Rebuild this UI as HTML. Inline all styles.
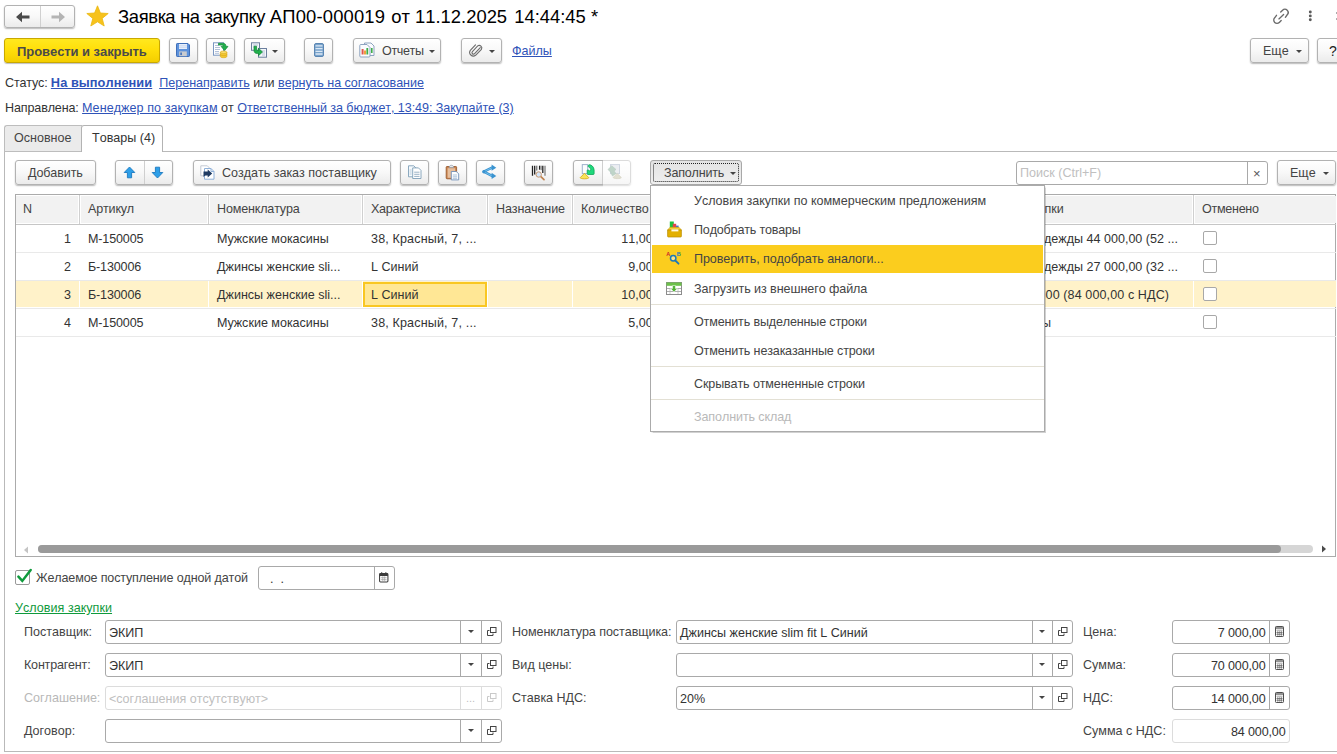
<!DOCTYPE html>
<html lang="ru">
<head>
<meta charset="utf-8">
<title>Заявка на закупку</title>
<style>
html,body{margin:0;padding:0;background:#fff;}
body{font-kerning:none;width:1337px;height:754px;position:relative;overflow:hidden;font-family:"Liberation Sans",Arial,sans-serif;font-size:12.55px;color:#333;line-height:17px;}
.a{position:absolute;white-space:nowrap;}
.btn{position:absolute;box-sizing:border-box;border:1px solid #b2b2b2;border-radius:3px;background:linear-gradient(#ffffff 0%,#f8f8f8 50%,#ebebeb 100%);box-shadow:0 1px 1.5px rgba(0,0,0,.28);white-space:nowrap;}
.btn .t{position:absolute;top:4px;line-height:17px;color:#444;}
.lnk{color:#2f53b8;text-decoration:underline;}
.dd{position:absolute;width:0;height:0;border-left:3.5px solid transparent;border-right:3.5px solid transparent;border-top:3.5px solid #444;}
.inp{position:absolute;box-sizing:border-box;border:1px solid #a9a9a9;border-radius:3px;background:#fff;height:24px;}
.inp .v{position:absolute;left:3px;top:4px;line-height:17px;color:#333;}
.inp .sep{position:absolute;top:0;bottom:0;width:1px;background:#a9a9a9;}
.inp.dis{border-color:#dcdcdc;}
.inp.dis .sep{background:#dcdcdc;}
.lbl{position:absolute;white-space:nowrap;color:#444;line-height:17px;}
svg{position:absolute;overflow:visible;}
</style>
</head>
<body>

<!-- ===== Title row ===== -->
<div class="btn" style="left:4px;top:5px;width:71px;height:23px;"></div>
<div class="a" style="left:40px;top:6px;width:1px;height:21px;background:#d0d0d0;"></div>
<svg style="left:15px;top:11px;" width="16" height="12" viewBox="0 0 16 12"><path d="M1 6 L7 0.8 L7 4.6 L14.5 4.6 L14.5 7.4 L7 7.4 L7 11.2 Z" fill="#4a4a4a"/></svg>
<svg style="left:50px;top:11px;" width="16" height="12" viewBox="0 0 16 12"><path d="M15 6 L9 0.8 L9 4.6 L1.5 4.6 L1.5 7.4 L9 7.4 L9 11.2 Z" fill="#b4b4b4"/></svg>
<svg style="left:86px;top:5px;" width="23" height="22" viewBox="0 0 23 22"><path d="M11.5 0.8 L14.4 8 L22.2 8.5 L16.2 13.4 L18.2 21 L11.5 16.8 L4.8 21 L6.8 13.4 L0.8 8.5 L8.6 8 Z" fill="#f7c21c" stroke="#eab70f" stroke-width="0.8" stroke-linejoin="round"/></svg>
<div class="a" style="left:118px;top:5px;font-size:18.4px;line-height:24px;color:#000;"><span style="letter-spacing:-0.35px;">Заявка на закупку </span><span style="letter-spacing:0.17px;">АП00-000019</span><span style="margin-left:1px;"> от 11.12.2025</span><span style="margin-left:2px;"> 14:44:45 *</span></div>

<!-- ===== Command bar ===== -->
<div class="btn" style="left:4px;top:38px;width:156px;height:25px;border-color:#c9a800;background:linear-gradient(#ffe81f 0%,#ffdf0a 45%,#f4ce00 100%);box-shadow:0 1px 1px rgba(0,0,0,.25);"><span class="t" style="left:12px;top:4px;font-weight:bold;font-size:13px;color:#4a4a4a;letter-spacing:-.06px;">Провести и закрыть</span></div>
<div class="btn" style="left:169px;top:38px;width:29px;height:25px;"></div>
<div class="btn" style="left:206px;top:38px;width:29px;height:25px;"></div>
<div class="btn" style="left:244px;top:38px;width:41px;height:25px;"><i class="dd" style="left:27px;top:11px;"></i></div>
<div class="btn" style="left:304px;top:38px;width:29px;height:25px;"></div>
<div class="btn" style="left:353px;top:38px;width:88px;height:25px;"><span class="t" style="left:28px;letter-spacing:-.37px;">Отчеты</span><i class="dd" style="left:75px;top:11px;"></i></div>
<div class="btn" style="left:461px;top:38px;width:41px;height:25px;"><i class="dd" style="left:27px;top:11px;"></i></div>
<div class="a lnk" style="left:512px;top:43px;">Файлы</div>
<div class="btn" style="left:1250px;top:38px;width:59px;height:25px;"><span class="t" style="left:12px;">Еще</span><i class="dd" style="left:45px;top:11px;"></i></div>
<div class="btn" style="left:1317px;top:38px;width:30px;height:25px;"><span class="t" style="left:11px;color:#222;font-size:14px;">?</span></div>

<!-- ===== Status lines ===== -->
<div class="a" style="left:5px;top:74px;"><span style="letter-spacing:-.15px;">Статус: </span><b class="lnk" style="font-size:12.8px;letter-spacing:.05px;">На выполнении</b>&nbsp; <span class="lnk">Перенаправить</span> или <span class="lnk" style="letter-spacing:-.05px;">вернуть на согласование</span></div>
<div class="a" style="left:5px;top:100px;"><span style="letter-spacing:-.13px;">Направлена: </span><span class="lnk" style="letter-spacing:.07px;">Менеджер по закупкам</span> от <span class="lnk" style="letter-spacing:-.065px;">Ответственный за бюджет, 13:49: Закупайте (3)</span></div>

<!-- ===== Tabs + page frame ===== -->
<div class="a" style="left:4px;top:151px;width:1340px;height:601px;box-sizing:border-box;border:1px solid #b9b9b9;border-right:none;background:#fff;"></div>
<div class="a" style="left:4px;top:125px;width:78px;height:27px;box-sizing:border-box;border:1px solid #bdbdbd;border-right:none;border-radius:3px 0 0 0;background:#ebebeb;"></div>
<div class="a" style="left:81px;top:125px;width:82px;height:27px;box-sizing:border-box;border:1px solid #b3b3b3;border-bottom:none;border-radius:3px 3px 0 0;background:#fff;"></div>
<div class="a" style="left:14px;top:130px;color:#444;">Основное</div>
<div class="a" style="left:92px;top:130px;color:#333;">Товары (4)</div>

<!-- ===== Table toolbar ===== -->
<div class="btn" style="left:15px;top:160px;width:81px;height:25px;"><span class="t" style="left:12px;letter-spacing:-.1px;">Добавить</span></div>
<div class="btn" style="left:115px;top:160px;width:58px;height:25px;"></div>
<div class="a" style="left:144px;top:161px;width:1px;height:23px;background:#cfcfcf;"></div>
<div class="btn" style="left:193px;top:160px;width:198px;height:25px;"><span class="t" style="left:28px;">Создать заказ поставщику</span></div>
<div class="btn" style="left:400px;top:160px;width:29px;height:25px;"></div>
<div class="btn" style="left:438px;top:160px;width:29px;height:25px;"></div>
<div class="btn" style="left:476px;top:160px;width:29px;height:25px;"></div>
<div class="btn" style="left:524px;top:160px;width:29px;height:25px;"></div>
<div class="btn" style="left:573px;top:160px;width:58px;height:25px;"></div>
<div class="a" style="left:602px;top:161px;width:1px;height:23px;background:#cfcfcf;"></div>
<div class="a" style="left:603px;top:160px;width:29px;height:27px;background:rgba(255,255,255,.55);"></div>
<div class="btn" style="left:650px;top:160px;width:92px;height:25px;background:linear-gradient(#e3e3e3,#efefef);border-color:#a8a8a8;box-shadow:none;"><span class="t" style="left:13px;letter-spacing:-.2px;">Заполнить</span><i class="dd" style="left:78.500px;top:11px;"></i><div style="position:absolute;left:2px;top:2px;right:2px;bottom:2px;border:1px dotted #222;border-radius:2px;"></div></div>
<div class="inp" style="left:1016px;top:161px;width:252px;height:24px;"><span class="v" style="color:#c0c0c0;left:3px;top:3px;">Поиск (Ctrl+F)</span><i class="sep" style="left:230px;"></i><span class="v" style="left:236px;top:3px;color:#555;font-size:13px;">×</span></div>
<div class="btn" style="left:1277px;top:160px;width:59px;height:25px;"><span class="t" style="left:12px;">Еще</span><i class="dd" style="left:45px;top:11px;"></i></div>


<!-- ===== Icons ===== -->
<svg style="left:176px;top:43px;" width="14" height="14" viewBox="0 0 14 14"><path d="M1.2 .5H12l1.5 1.5v10.8a.7.7 0 0 1-.7.7H1.2a.7.7 0 0 1-.7-.7V1.2a.7.7 0 0 1 .7-.7z" fill="#5d92dc" stroke="#3f6fb9" stroke-width="1"/><rect x="3" y="1" width="8" height="5" fill="#e6eefb"/><path d="M3 2.7h8M3 4.3h8" stroke="#c3d3ee" stroke-width=".7"/><rect x="3.2" y="8.4" width="7.6" height="4.8" fill="#c9cbcf"/><rect x="4.3" y="9.5" width="1.6" height="2.6" fill="#3f6fb9"/></svg>
<svg style="left:213px;top:42px;" width="16" height="16" viewBox="0 0 16 16"><rect x=".5" y=".8" width="10" height="12.4" fill="#fff" stroke="#7a97c2" stroke-width="1"/><path d="M2 3.5h4M2 5.5h5M2 7.5h5M2 9.5h4M2 11.3h4" stroke="#9eb1cf" stroke-width=".8"/><path d="M5.5 1.2h4.3c2.2 0 3.2 1.3 3.2 3.2h2L11.6 8.6 8.1 4.4h2.1c0-.9-.4-1.3-1.3-1.3H5.5z" fill="#21b04b" stroke="#12853a" stroke-width=".7" stroke-linejoin="round"/><path d="M7.3 10.2v4.2c0 .8 1.5 1.3 3.3 1.3s3.3-.5 3.3-1.3v-4.2z" fill="#f2c832"/><ellipse cx="10.6" cy="10.2" rx="3.3" ry="1.2" fill="#fbe27a" stroke="#d9a514" stroke-width=".6"/><path d="M7.3 12.3c0 .8 1.5 1.3 3.3 1.3s3.3-.5 3.3-1.3M7.3 14.4c0 .8 1.5 1.3 3.3 1.3s3.3-.5 3.3-1.3M7.3 10.2v4.2M13.9 10.2v4.2" fill="none" stroke="#d9a514" stroke-width=".6"/></svg>
<svg style="left:251px;top:42px;" width="16" height="16" viewBox="0 0 16 16"><rect x=".5" y=".8" width="8" height="7.5" fill="#f4f7fb" stroke="#6c7f9e" stroke-width="1"/><path d="M2 3h5M2 5h3" stroke="#a9b8d0" stroke-width=".8"/><rect x="7.5" y="6.5" width="8" height="8.7" fill="#f4f7fb" stroke="#6c7f9e" stroke-width="1"/><path d="M9.5 9h4.5M11 11h3M11 13h3" stroke="#a9b8d0" stroke-width=".8"/><path d="M3 4.2h2.6v3c0 .9.4 1.3 1.3 1.3h.6V6.3l4 3.7-4 3.7v-2.2H6.300c-2.300 0-3.300-1.200-3.300-3.300z" fill="#21b04b" stroke="#12853a" stroke-width=".7" stroke-linejoin="round"/></svg>
<svg style="left:314px;top:43px;" width="10" height="14" viewBox="0 0 10 14"><rect x=".5" y=".5" width="9" height="13" rx="1.5" fill="#78a3cb" stroke="#5b86b3" stroke-width="1"/><path d="M1.5 2.9h7M1.5 5.6h7M1.5 8.3h7M1.500 11h7" stroke="#dbe8f5" stroke-width="1.3"/></svg>
<svg style="left:359px;top:42px;" width="16" height="16" viewBox="0 0 16 16"><path d="M5.5 1h6.500l3 3v9.500h-9.500z" fill="#fbfcfe" stroke="#8ea3bf" stroke-width="1" stroke-linejoin="round"/><path d="M.8 3.500a1 1 0 0 1 1-1h6.200l3 3v8.500a1 1 0 0 1-1 1h-8.200a1 1 0 0 1-1-1z" fill="#fbfcfe" stroke="#8ea3bf" stroke-width="1" stroke-linejoin="round"/><rect x="2.600" y="7" width="2" height="5.500" fill="#e2574c"/><rect x="5" y="8.500" width="2" height="4" fill="#f0a23c"/><rect x="7.400" y="6" width="1.800" height="6.500" fill="#3fae49"/><rect x="12" y="6" width="1.600" height="5" fill="#3fae49"/></svg>
<svg style="left:469px;top:43px;" width="13" height="14" viewBox="0 0 13 14"><path d="M11.300 4.600 5.600 10.700a1.500 1.500 0 0 1-2.200-2.100L8.700 2.900a2.600 2.600 0 0 1 3.700 3.500L6.600 12.300a3.700 3.700 0 0 1-5.300-5L6.500 1.800" fill="none" stroke="#6b6b6b" stroke-width="1.100" stroke-linecap="round"/></svg>
<svg style="left:1273px;top:7.500px;" width="17" height="17" viewBox="0 0 17 17"><g fill="none" stroke="#6a6a6a" stroke-width="1.350" stroke-linecap="round"><path d="M7.700 4.100 9.600 2.200A3.250 3.250 0 0 1 14.200 6.800L12.400 9.300"/><path d="M8.200 12.500 6.300 14.400A3.250 3.250 0 0 1 1.700 9.800L3.500 7.300"/><path d="M5.900 10.900 10.600 6.500"/></g></svg>
<svg style="left:1308px;top:10px;" width="5" height="12" viewBox="0 0 5 12"><circle cx="2.300" cy="2" r="1.450" fill="#5a5a5a"/><circle cx="2.300" cy="5.900" r="1.450" fill="#5a5a5a"/><circle cx="2.300" cy="9.800" r="1.450" fill="#5a5a5a"/></svg>
<svg style="left:1335.500px;top:12px;" width="8" height="8" viewBox="0 0 8 8"><path d="M.500.500 7.500 7.500M7.500.500.500 7.500" stroke="#5a5a5a" stroke-width="1.400"/></svg>
<svg style="left:123px;top:166px;" width="13" height="13" viewBox="0 0 13 13"><path d="M6.500 1 11.800 6.500H8.600V11.800H4.400V6.500H1.200z" fill="#2d9fe8" stroke="#1b78bf" stroke-width=".9" stroke-linejoin="round"/></svg>
<svg style="left:151px;top:166px;" width="13" height="13" viewBox="0 0 13 13"><path d="M6.500 12 11.800 6.500H8.600V1.200H4.400V6.500H1.200z" fill="#2d9fe8" stroke="#1b78bf" stroke-width=".9" stroke-linejoin="round"/></svg>
<svg style="left:200px;top:165px;" width="15" height="15" viewBox="0 0 15 15"><path d="M.8.800h6.500l2.500 2.500v7.500h-9z" fill="#fff" stroke="#c3c9d3" stroke-width="1"/><path d="M4.500 3.500h6.500l3 3v7.700h-9.500z" fill="#fff" stroke="#8fb0d8" stroke-width="1" stroke-linejoin="round"/><path d="M11 3.500v3h3" fill="none" stroke="#8fb0d8" stroke-width="1"/><path d="M3.500 6.600h4.200V4.600L12.200 8.500 7.700 12.400v-2H6.500c-1 0-2.100.4-3 1.600z" fill="#1f3b63"/></svg>
<svg style="left:408px;top:165px;" width="15" height="15" viewBox="0 0 15 15"><path d="M.500.800h5.300l2 2v9H.500z" fill="#f6fafd" stroke="#7f9fb8" stroke-width=".9" stroke-linejoin="round"/><path d="M1.600 5h2M1.600 7h2M1.600 9h2" stroke="#a9c0d3" stroke-width=".8"/><path d="M4.700 2.900h5.800l2.500 2.500v8.100H4.700z" fill="#fff" stroke="#7f9fb8" stroke-width=".9" stroke-linejoin="round"/><path d="M6.200 7.200h5.300M6.200 9.300h5.300M6.200 11.400h5.300" stroke="#8fa9c0" stroke-width=".9"/></svg>
<svg style="left:445px;top:164px;" width="16" height="17" viewBox="0 0 16 17"><rect x="1.200" y="2.500" width="10.400" height="12.300" rx=".8" fill="#c9824e" stroke="#9a5a2c" stroke-width=".9"/><rect x="2.600" y="4.200" width="7.600" height="9.600" fill="#e6bf9d"/><path d="M4 3.600c0-1.300 1-2.300 2.400-2.300s2.400 1 2.400 2.300z" fill="#e3e7ec" stroke="#8d96a3" stroke-width=".7"/><path d="M6.300 7.500h5l2.400 2.400v6H6.300z" fill="#fbfdff" stroke="#6f8fb8" stroke-width=".9" stroke-linejoin="round"/><path d="M7.800 11h4.300M7.800 12.800h4.300M7.800 14.300h4.300" stroke="#9ab4d2" stroke-width=".8"/></svg>
<svg style="left:482px;top:164px;" width="15" height="16" viewBox="0 0 15 16"><path d="M1.800 7.700 10 3.700M1.800 7.700 10 11.900" stroke="#3a93d0" stroke-width="2.500" fill="none" stroke-linecap="round"/><path d="M1.800 7.700 10 3.700M1.800 7.700 10 11.900" stroke="#79c4ee" stroke-width=".9" fill="none" stroke-linecap="round"/><path d="M9.600.600 14.300 3.700 9.600 6.800z" fill="#3a93d0"/><path d="M9.600 8.800 14.300 11.900 9.600 15z" fill="#3a93d0"/><circle cx="1.900" cy="7.700" r="1.700" fill="#3a93d0"/></svg>
<svg style="left:531px;top:165px;" width="16" height="16" viewBox="0 0 16 16"><path d="M1.500.700v10.100M3.700.700v8.800" stroke="#222" stroke-width="1.300"/><path d="M5.800.700v4.800" stroke="#222" stroke-width=".8"/><path d="M8.600.700v4" stroke="#222" stroke-width="1.300"/><path d="M10.200.700v4.500" stroke="#222" stroke-width=".6"/><path d="M11.800.700v7.300" stroke="#222" stroke-width="1.300"/><path d="M14 .700v10.100" stroke="#8a8a8a" stroke-width="1.400"/><path d="M9.600 11.400 13 14.600" stroke="#c0834f" stroke-width="1.700" stroke-linecap="round"/><circle cx="7.700" cy="9.500" r="2.700" fill="#d3e6fb" stroke="#c9986e" stroke-width="1"/></svg>
<!-- ===== Table ===== -->
<div class="a" style="left:15px;top:194px;width:1321px;height:363px;box-sizing:border-box;border:1px solid #ababab;border-right:1px solid #ababab;background:#fff;"></div>
<div class="a" style="left:16px;top:196px;width:62px;height:27px;background:#f2f2f2;"></div>
<div class="a" style="left:81px;top:196px;width:126px;height:27px;background:#f2f2f2;"></div>
<div class="a" style="left:210px;top:196px;width:151px;height:27px;background:#f2f2f2;"></div>
<div class="a" style="left:364px;top:196px;width:122px;height:27px;background:#f2f2f2;"></div>
<div class="a" style="left:489px;top:196px;width:82px;height:27px;background:#f2f2f2;"></div>
<div class="a" style="left:574px;top:196px;width:125px;height:27px;background:#f2f2f2;"></div>
<div class="a" style="left:702px;top:196px;width:117px;height:27px;background:#f2f2f2;"></div>
<div class="a" style="left:822px;top:196px;width:117px;height:27px;background:#f2f2f2;"></div>
<div class="a" style="left:942px;top:196px;width:250px;height:27px;background:#f2f2f2;"></div>
<div class="a" style="left:1195px;top:196px;width:141px;height:27px;background:#f2f2f2;"></div>
<div class="a" style="left:79px;top:195px;width:1px;height:29px;background:#d0d0d0;"></div>
<div class="a" style="left:208px;top:195px;width:1px;height:29px;background:#d0d0d0;"></div>
<div class="a" style="left:362px;top:195px;width:1px;height:29px;background:#d0d0d0;"></div>
<div class="a" style="left:487px;top:195px;width:1px;height:29px;background:#d0d0d0;"></div>
<div class="a" style="left:572px;top:195px;width:1px;height:29px;background:#d0d0d0;"></div>
<div class="a" style="left:700px;top:195px;width:1px;height:29px;background:#d0d0d0;"></div>
<div class="a" style="left:820px;top:195px;width:1px;height:29px;background:#d0d0d0;"></div>
<div class="a" style="left:940px;top:195px;width:1px;height:29px;background:#d0d0d0;"></div>
<div class="a" style="left:1193px;top:195px;width:1px;height:29px;background:#d0d0d0;"></div>
<div class="a" style="left:16px;top:224px;width:1320px;height:1px;background:#c6c6c6;"></div>
<div class="a" style="left:23px;top:201px;color:#444;">N</div>
<div class="a" style="left:88px;top:201px;color:#444;letter-spacing:-.17px;">Артикул</div>
<div class="a" style="left:217px;top:201px;color:#444;letter-spacing:-.15px;">Номенклатура</div>
<div class="a" style="left:371px;top:201px;color:#444;letter-spacing:-.27px;">Характеристика</div>
<div class="a" style="left:496px;top:201px;color:#444;letter-spacing:-.12px;">Назначение</div>
<div class="a" style="left:581px;top:201px;color:#444;">Количество</div>
<div class="a" style="left:1202px;top:201px;color:#444;letter-spacing:-0.28px;">Отменено</div>
<div class="a" style="right:273.300px;top:201px;color:#444;">Условия закупки</div>
<div class="a" style="left:16px;top:252px;width:1320px;height:1px;background:#e9e9e9;"></div>
<div class="a" style="left:40px;width:31px;text-align:right;top:231px;">1</div>
<div class="a" style="left:88px;top:231px;letter-spacing:-.15px;">М-150005</div>
<div class="a" style="left:217px;top:231px;">Мужские мокасины</div>
<div class="a" style="left:371px;top:231px;letter-spacing:.15px;">38, Красный, 7, ...</div>
<div class="a" style="left:582.7px;width:70px;text-align:right;top:231px;">11,00</div>
<div class="a" style="left:1044px;top:231px;">дежды 44 000,00 (52 ...</div>
<div class="a" style="left:1203px;top:231px;width:14px;height:14px;box-sizing:border-box;border:1px solid #a8a8a8;border-radius:2px;background:#fff;"></div>
<div class="a" style="left:16px;top:280px;width:1320px;height:1px;background:#e9e9e9;"></div>
<div class="a" style="left:40px;width:31px;text-align:right;top:259px;">2</div>
<div class="a" style="left:88px;top:259px;letter-spacing:-.15px;">Б-130006</div>
<div class="a" style="left:217px;top:259px;">Джинсы женские sli...</div>
<div class="a" style="left:371px;top:259px;">L Синий</div>
<div class="a" style="left:582.7px;width:70px;text-align:right;top:259px;">9,00</div>
<div class="a" style="left:1044px;top:259px;">дежды 27 000,00 (32 ...</div>
<div class="a" style="left:1203px;top:259px;width:14px;height:14px;box-sizing:border-box;border:1px solid #a8a8a8;border-radius:2px;background:#fff;"></div>
<div class="a" style="left:16px;top:281px;width:63px;height:26px;background:#fff2c9;"></div>
<div class="a" style="left:80px;top:281px;width:128px;height:26px;background:#fff2c9;"></div>
<div class="a" style="left:209px;top:281px;width:153px;height:26px;background:#fff2c9;"></div>
<div class="a" style="left:363px;top:281px;width:124px;height:26px;background:#fff2c9;"></div>
<div class="a" style="left:488px;top:281px;width:84px;height:26px;background:#fff2c9;"></div>
<div class="a" style="left:573px;top:281px;width:127px;height:26px;background:#fff2c9;"></div>
<div class="a" style="left:701px;top:281px;width:119px;height:26px;background:#fff2c9;"></div>
<div class="a" style="left:821px;top:281px;width:119px;height:26px;background:#fff2c9;"></div>
<div class="a" style="left:941px;top:281px;width:252px;height:26px;background:#fff2c9;"></div>
<div class="a" style="left:1194px;top:281px;width:142px;height:26px;background:#fff2c9;"></div>
<div class="a" style="left:363px;top:282px;width:124px;height:25px;box-sizing:border-box;background:#ffe795;border:2px solid #f9c722;"></div>
<div class="a" style="left:16px;top:308px;width:1320px;height:1px;background:#e9e9e9;"></div>
<div class="a" style="left:40px;width:31px;text-align:right;top:287px;">3</div>
<div class="a" style="left:88px;top:287px;letter-spacing:-.15px;">Б-130006</div>
<div class="a" style="left:217px;top:287px;">Джинсы женские sli...</div>
<div class="a" style="left:371px;top:287px;">L Синий</div>
<div class="a" style="left:582.7px;width:70px;text-align:right;top:287px;">10,00</div>
<div class="a" style="left:1042px;top:287px;letter-spacing:.1px;">,00 (84 000,00 с НДС)</div>
<div class="a" style="left:1203px;top:287px;width:14px;height:14px;box-sizing:border-box;border:1px solid #a8a8a8;border-radius:2px;background:#fff;"></div>
<div class="a" style="left:16px;top:336px;width:1320px;height:1px;background:#e9e9e9;"></div>
<div class="a" style="left:40px;width:31px;text-align:right;top:315px;">4</div>
<div class="a" style="left:88px;top:315px;letter-spacing:-.15px;">М-150005</div>
<div class="a" style="left:217px;top:315px;">Мужские мокасины</div>
<div class="a" style="left:371px;top:315px;letter-spacing:.15px;">38, Красный, 7, ...</div>
<div class="a" style="left:582.7px;width:70px;text-align:right;top:315px;">5,00</div>
<div class="a" style="left:1042px;top:315px;">ы</div>
<div class="a" style="left:1203px;top:315px;width:14px;height:14px;box-sizing:border-box;border:1px solid #a8a8a8;border-radius:2px;background:#fff;"></div>
<div class="a" style="left:38px;top:545px;width:1275px;height:8px;border-radius:4px;background:#d6d6d6;"></div>
<div class="a" style="left:38px;top:545px;width:1243px;height:8px;border-radius:4px;background:#9a9a9a;"></div>
<svg style="left:23px;top:545.500px;" width="6" height="8" viewBox="0 0 6 8"><path d="M5 0.5 L1 4 L5 7.5 Z" fill="#c4c4c4"/></svg>
<svg style="left:1321.300px;top:545px;" width="6" height="8" viewBox="0 0 6 8"><path d="M1 0.5 L5 4 L1 7.5 Z" fill="#4a4a4a"/></svg>

<!-- ===== Bottom form ===== -->
<div class="a" style="left:15px;top:570px;width:15px;height:15px;box-sizing:border-box;border:1px solid #9a9a9a;border-radius:2px;background:#fff;"></div>
<svg style="left:17px;top:569px;" width="15" height="14" viewBox="0 0 15 14"><path d="M1.400 7.700 5.300 11.900 13.700 1.100" fill="none" stroke="#0f9a3c" stroke-width="2.500" stroke-linecap="round" stroke-linejoin="miter"/></svg>
<div class="lbl" style="left:36px;top:570px;letter-spacing:-.135px;">Желаемое поступление одной датой</div>
<div class="inp" style="left:258px;top:566px;width:137px;"><span class="v" style="left:11px;">.&nbsp;&nbsp;.</span><i class="sep" style="left:115px;"></i><svg style="left:120px;top:4.500px;" width="9.500" height="10.500" viewBox="0 0 10 11"><rect x=".600" y="1.600" width="8.800" height="8.800" rx="1" fill="#fff" stroke="#3c3c3c" stroke-width="1.100"/><rect x=".600" y="1.600" width="8.800" height="2.600" fill="#3c3c3c"/><path d="M2.800.300v2M7.200.300v2" stroke="#3c3c3c" stroke-width="1.200"/><path d="M2 6h6M2 8h6M4 4.500v5M6 4.500v5" stroke="#9a9a9a" stroke-width=".7"/></svg></div>
<div class="a" style="left:15px;top:600px;color:#0f9a3c;text-decoration:underline;letter-spacing:.05px;">Условия закупки</div>
<div class="lbl" style="left:24px;top:624px;">Поставщик:</div>
<div class="inp" style="left:105px;top:620px;width:397px;"><span class="v">ЭКИП</span><i class="sep" style="left:354px;"></i><i class="sep" style="left:375px;"></i><i class="dd" style="left:362px;top:9px;border-top-color:#444;border-left-width:3px;border-right-width:3px;border-top-width:3px;"></i><svg style="left:381px;top:6px;" width="10" height="10" viewBox="0 0 10 10"><rect x="3.5" y="0.5" width="5.5" height="5" fill="none" stroke="#444" stroke-width="1"/><path d="M2.5 3.5 L0.5 3.5 L0.5 8.5 L6 8.5 L6 6.5" fill="none" stroke="#444" stroke-width="1"/></svg></div>
<div class="lbl" style="left:24px;top:657px;letter-spacing:-.2px;">Контрагент:</div>
<div class="inp" style="left:105px;top:653px;width:397px;"><span class="v">ЭКИП</span><i class="sep" style="left:354px;"></i><i class="sep" style="left:375px;"></i><i class="dd" style="left:362px;top:9px;border-top-color:#444;border-left-width:3px;border-right-width:3px;border-top-width:3px;"></i><svg style="left:381px;top:6px;" width="10" height="10" viewBox="0 0 10 10"><rect x="3.5" y="0.5" width="5.5" height="5" fill="none" stroke="#444" stroke-width="1"/><path d="M2.5 3.5 L0.5 3.5 L0.5 8.5 L6 8.5 L6 6.5" fill="none" stroke="#444" stroke-width="1"/></svg></div>
<div class="lbl" style="left:24px;top:690px;color:#b8b8b8;">Соглашение:</div>
<div class="inp dis" style="left:105px;top:686px;width:397px;"><span class="v" style="color:#c0c0c0;">&lt;соглашения отсутствуют&gt;</span><i class="sep" style="left:354px;"></i><i class="sep" style="left:375px;"></i><span class="v" style="left:360px;top:3px;color:#c0c0c0;font-size:11px;">...</span><svg style="left:381px;top:6px;" width="10" height="10" viewBox="0 0 10 10"><rect x="3.5" y="0.5" width="5.5" height="5" fill="none" stroke="#c9c9c9" stroke-width="1"/><path d="M2.5 3.5 L0.5 3.5 L0.5 8.5 L6 8.5 L6 6.5" fill="none" stroke="#c9c9c9" stroke-width="1"/></svg></div>
<div class="lbl" style="left:24px;top:723px;">Договор:</div>
<div class="inp" style="left:105px;top:719px;width:397px;"><span class="v"></span><i class="sep" style="left:354px;"></i><i class="sep" style="left:375px;"></i><i class="dd" style="left:362px;top:9px;border-top-color:#444;border-left-width:3px;border-right-width:3px;border-top-width:3px;"></i><svg style="left:381px;top:6px;" width="10" height="10" viewBox="0 0 10 10"><rect x="3.5" y="0.5" width="5.5" height="5" fill="none" stroke="#444" stroke-width="1"/><path d="M2.5 3.5 L0.5 3.5 L0.5 8.5 L6 8.5 L6 6.5" fill="none" stroke="#444" stroke-width="1"/></svg></div>
<div class="lbl" style="left:512px;top:624px;letter-spacing:-.05px;">Номенклатура поставщика:</div>
<div class="inp" style="left:676px;top:620px;width:397px;"><span class="v">Джинсы женские slim fit L Синий</span><i class="sep" style="left:355px;"></i><i class="sep" style="left:375px;"></i><i class="dd" style="left:362px;top:9px;border-top-color:#444;border-left-width:3px;border-right-width:3px;border-top-width:3px;"></i><svg style="left:381px;top:6px;" width="10" height="10" viewBox="0 0 10 10"><rect x="3.5" y="0.5" width="5.5" height="5" fill="none" stroke="#444" stroke-width="1"/><path d="M2.5 3.5 L0.5 3.5 L0.5 8.5 L6 8.5 L6 6.5" fill="none" stroke="#444" stroke-width="1"/></svg></div>
<div class="lbl" style="left:512px;top:657px;">Вид цены:</div>
<div class="inp" style="left:676px;top:653px;width:397px;"><span class="v"></span><i class="sep" style="left:355px;"></i><i class="sep" style="left:375px;"></i><i class="dd" style="left:362px;top:9px;border-top-color:#444;border-left-width:3px;border-right-width:3px;border-top-width:3px;"></i><svg style="left:381px;top:6px;" width="10" height="10" viewBox="0 0 10 10"><rect x="3.5" y="0.5" width="5.5" height="5" fill="none" stroke="#444" stroke-width="1"/><path d="M2.5 3.5 L0.5 3.5 L0.5 8.5 L6 8.5 L6 6.5" fill="none" stroke="#444" stroke-width="1"/></svg></div>
<div class="lbl" style="left:512px;top:690px;">Ставка НДС:</div>
<div class="inp" style="left:676px;top:686px;width:397px;"><span class="v">20%</span><i class="sep" style="left:355px;"></i><i class="sep" style="left:375px;"></i><i class="dd" style="left:362px;top:9px;border-top-color:#444;border-left-width:3px;border-right-width:3px;border-top-width:3px;"></i><svg style="left:381px;top:6px;" width="10" height="10" viewBox="0 0 10 10"><rect x="3.5" y="0.5" width="5.5" height="5" fill="none" stroke="#444" stroke-width="1"/><path d="M2.5 3.5 L0.5 3.5 L0.5 8.5 L6 8.5 L6 6.5" fill="none" stroke="#444" stroke-width="1"/></svg></div>
<div class="lbl" style="left:1083px;top:624px;">Цена:</div>
<div class="inp" style="left:1172px;top:620px;width:118px;"><span class="v" style="left:auto;right:23.500px;letter-spacing:-.15px;">7 000,00</span><i class="sep" style="left:96px;"></i><svg style="left:101.500px;top:5px;" width="9" height="11" viewBox="0 0 9 11"><rect x=".500" y=".500" width="8" height="10" rx=".8" fill="#fff" stroke="#4e4e4e" stroke-width="1"/><path d="M.500 2h8" stroke="#4e4e4e" stroke-width="1.200"/><path d="M1.500 4.200h6" stroke="#8a8a8a" stroke-width=".8"/><path d="M2.800 5.200v4.500M4.800 5.200v4.500M6.600 5.200v4.500M1.500 6.500h6M1.500 8.300h6" stroke="#6a6a6a" stroke-width=".8"/></svg></div>
<div class="lbl" style="left:1083px;top:657px;">Сумма:</div>
<div class="inp" style="left:1172px;top:653px;width:118px;"><span class="v" style="left:auto;right:23.500px;letter-spacing:-.15px;">70 000,00</span><i class="sep" style="left:96px;"></i><svg style="left:101.500px;top:5px;" width="9" height="11" viewBox="0 0 9 11"><rect x=".500" y=".500" width="8" height="10" rx=".8" fill="#fff" stroke="#4e4e4e" stroke-width="1"/><path d="M.500 2h8" stroke="#4e4e4e" stroke-width="1.200"/><path d="M1.500 4.200h6" stroke="#8a8a8a" stroke-width=".8"/><path d="M2.800 5.200v4.500M4.800 5.200v4.500M6.600 5.200v4.500M1.500 6.500h6M1.500 8.300h6" stroke="#6a6a6a" stroke-width=".8"/></svg></div>
<div class="lbl" style="left:1083px;top:690px;">НДС:</div>
<div class="inp" style="left:1172px;top:686px;width:118px;"><span class="v" style="left:auto;right:23.500px;letter-spacing:-.15px;">14 000,00</span><i class="sep" style="left:96px;"></i><svg style="left:101.500px;top:5px;" width="9" height="11" viewBox="0 0 9 11"><rect x=".500" y=".500" width="8" height="10" rx=".8" fill="#fff" stroke="#4e4e4e" stroke-width="1"/><path d="M.500 2h8" stroke="#4e4e4e" stroke-width="1.200"/><path d="M1.500 4.200h6" stroke="#8a8a8a" stroke-width=".8"/><path d="M2.800 5.200v4.500M4.800 5.200v4.500M6.600 5.200v4.500M1.500 6.500h6M1.500 8.300h6" stroke="#6a6a6a" stroke-width=".8"/></svg></div>
<div class="lbl" style="left:1083px;top:723px;">Сумма с НДС:</div>
<div class="inp" style="left:1172px;top:719px;width:118px;border-color:#dcdcdc;"><span class="v" style="left:auto;right:3.500px;letter-spacing:-.15px;">84 000,00</span></div>
<!-- ===== Dropdown menu ===== -->
<div class="a" style="left:650px;top:185px;width:395px;height:247px;box-sizing:border-box;border:1px solid #ababab;background:#fff;box-shadow:.5px .5px 1px rgba(0,0,0,.18);"></div>
<div class="a" style="left:652px;top:245px;width:391px;height:28px;background:#fbcd1e;"></div>
<div class="a" style="left:694px;top:193px;color:#444;font-size:12.55px;">Условия закупки по коммерческим предложениям</div>
<div class="a" style="left:694px;top:222px;color:#444;font-size:12.55px;letter-spacing:-0.18px;">Подобрать товары</div>
<div class="a" style="left:694px;top:251px;color:#444;font-size:12.55px;letter-spacing:-0.08px;">Проверить, подобрать аналоги...</div>
<div class="a" style="left:694px;top:281px;color:#444;font-size:12.55px;letter-spacing:-0.08px;">Загрузить из внешнего файла</div>
<div class="a" style="left:694px;top:314px;color:#444;font-size:12.55px;letter-spacing:-0.157px;">Отменить выделенные строки</div>
<div class="a" style="left:694px;top:343px;color:#444;font-size:12.55px;letter-spacing:-0.135px;">Отменить незаказанные строки</div>
<div class="a" style="left:694px;top:376px;color:#444;font-size:12.55px;letter-spacing:-0.12px;">Скрывать отмененные строки</div>
<div class="a" style="left:694px;top:409px;color:#b9b9b9;font-size:12.55px;letter-spacing:-0.1px;">Заполнить склад</div>
<div class="a" style="left:651px;top:304px;width:393px;height:1px;background:#e3e0d4;"></div>
<div class="a" style="left:651px;top:366px;width:393px;height:1px;background:#e3e0d4;"></div>
<div class="a" style="left:651px;top:399px;width:393px;height:1px;background:#e3e0d4;"></div>

<!-- ===== Icons 2 ===== -->
<svg style="left:580px;top:164px;" width="15" height="15" viewBox="0 0 15 15"><rect x="2.300" y=".600" width="5.400" height="9" fill="#fbfcfe" stroke="#9fb2cc" stroke-width="1"/><path d="M9.300.700c1.600 0 4.800 1.800 4.800 5.300v3.700c0 .500-.300.800-.800.800H8c-.500 0-.800-.300-.800-.800V6.500c0-.400.300-.700.700-.700l1.800 1.200 1-1.200c0-1.300-1-2.300-2-2.700-.700-.300-.700-2.400.600-2.400z" fill="#1fd97c" stroke="#0fa558" stroke-width=".8" stroke-linejoin="round"/><path d="M4.500 9.300 8.800 13.700c0 .700-2 1.100-4.300 1.100S.200 14.400.200 13.700z" fill="#f7e35a" stroke="#d8ad1e" stroke-width=".9" stroke-linejoin="round"/></svg>
<svg style="left:607px;top:164px;opacity:.55;" width="15" height="15" viewBox="0 0 15 15"><rect x="3.500" y=".600" width="9" height="9" fill="#dfe3ea" stroke="#a9b6c9" stroke-width="1"/><path d="M1 5.500 4.800 1.800 9 5.500 7 7l2 2.500-3.500 2.500L3.500 8z" fill="#8fb5a0" stroke="#7da390" stroke-width=".6" stroke-linejoin="round"/><path d="M10.200 9.500 14.300 13.500c0 .700-2 1.100-4.100 1.100s-4.100-.400-4.100-1.100z" fill="#cfcbb0" stroke="#bdb89c" stroke-width=".8" stroke-linejoin="round"/></svg>
<svg style="left:667px;top:221px;z-index:5;" width="15" height="17" viewBox="0 0 15 17"><rect x="2.800" y=".500" width="4" height="6.500" fill="#1fc13f"/><rect x="5.800" y="2.800" width="3.400" height="4.500" fill="#e0434b"/><rect x="9" y="4.600" width="2.600" height="3" fill="#3c6fd6"/><path d="M.600 9 3 6.300h9L14.400 9z" fill="#f3cf3a" stroke="#c79a00" stroke-width=".6"/><path d="M.600 9h13.800v6.300a.7.700 0 0 1-.7.700H1.300a.7.700 0 0 1-.7-.7z" fill="#e3b000" stroke="#b98c00" stroke-width=".7"/><rect x="4.400" y="8.400" width="7" height="2" fill="#fffbe6"/></svg>
<svg style="left:666px;top:251px;z-index:5;" width="15" height="14" viewBox="0 0 15 14"><circle cx="7.200" cy="7.300" r="2.700" fill="#fbe38a" stroke="#1b79b7" stroke-width="1.500"/><path d="M9.300 9.500 12.500 12.700" stroke="#1b79b7" stroke-width="1.800" stroke-linecap="round"/><text x=".300" y="5" font-family="Liberation Sans, sans-serif" font-size="5.500" font-weight="bold" fill="#c9252c">A</text><text x="10.800" y="5" font-family="Liberation Sans, sans-serif" font-size="5.500" font-weight="bold" fill="#1b79b7">B</text></svg>
<svg style="left:666px;top:282px;z-index:5;" width="16" height="13" viewBox="0 0 16 13"><rect x=".500" y=".500" width="15" height="12" fill="#fff" stroke="#8c8c8c" stroke-width="1"/><rect x=".500" y=".500" width="15" height="3.300" fill="#6cc04a"/><path d="M1 6.500h14M1 9.500h14" stroke="#9a9a9a" stroke-width=".8"/><path d="M3 8h2M11 8h2M3 11h2M11 11h2" stroke="#b5b5b5" stroke-width=".7"/><path d="M6.600 3.500h2.800v3h2L8 10 4.600 6.500h2z" fill="#4fb233" stroke="#fff" stroke-width=".5"/></svg>

</body>
</html>
